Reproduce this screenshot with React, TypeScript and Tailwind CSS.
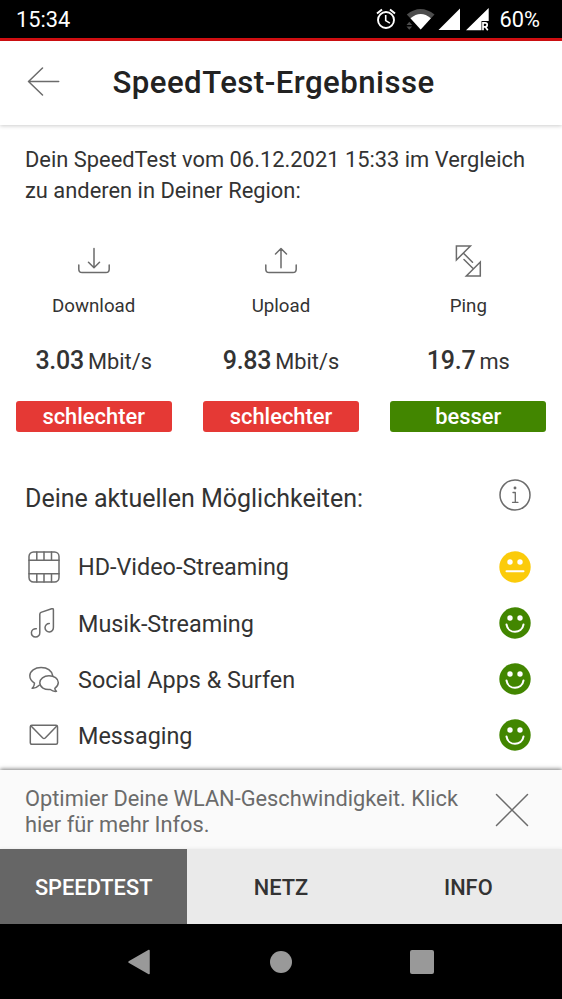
import type { ReactNode } from "react";

const stroke = { fill: "none", stroke: "#6b6b6b", strokeWidth: 1.5, strokeLinecap: "round", strokeLinejoin: "round" } as const;

function StatusBar() {
  return (
    <div className="flex h-[41px] shrink-0 justify-between border-b-[3.5px] border-[#d40f12] bg-black pr-[22px] pl-4 text-[21.800px] leading-[39px] text-white">
      <span>15:34</span>
      <div className="flex">
        <svg width="127" height="37" viewBox="373 0 127 37">
          <g fill="none" stroke="#fff" strokeWidth="1.9">
            <circle cx="386" cy="20" r="8" />
            <path d="M385.7 15v5.6l4.2 2.5" strokeWidth="1.6" />
            <path d="M377 13.6l5-4.2M395 13.6l-5-4.2" />
          </g>
          <path d="M406.800 14.500Q420.500 3.500 434.500 14.500L420.700 29.500Z" fill="#4d4d4d" />
          <path d="M410.500 18.300Q420.700 9.800 430.900 18.300L420.700 29.500Z" fill="#fff" />
          <path d="M406.500 25l2.800-3.200 2.800 3.200zM406.500 26.500l2.800 3.200 2.800-3.200z" fill="#4d4d4d" />
          <path d="M460 8.500V30H438.500z" fill="#fff" />
          <path d="M488.700 8V21H481.500V30.300H466z" fill="#fff" />
          <path d="M483 30.300v-7.500h2.200a1.900 1.900 0 0 1 0 4H483M485.300 26.800l2.500 3.500" fill="none" stroke="#fff" strokeWidth="1.700" />
        </svg>
        <span>60%</span>
      </div>
    </div>
  );
}

function DownloadIcon() {
  return (
    <svg width="34" height="34" viewBox="0 0 34 34" {...stroke}>
      <path d="M17 4.500V23.500M11.500 18.200L17 23.700L22.500 18.200M1.800 21v4.200q0 3.300 3.300 3.300h23.800q3.300 0 3.300-3.300V21" />
    </svg>
  );
}

function UploadIcon() {
  return (
    <svg width="34" height="34" viewBox="0 0 34 34" {...stroke}>
      <path d="M17 23.700V4.700M11.500 10L17 4.500L22.500 10M1.800 21v4.200q0 3.300 3.300 3.300h23.800q3.300 0 3.300-3.300V21" />
    </svg>
  );
}

function PingIcon() {
  return (
    <svg width="34" height="34" viewBox="0 0 34 34" {...stroke} strokeLinejoin="miter">
      <path d="M5.400 2H19.400L5.400 16ZM29.300 18V32H15.300ZM13 9.700L21.500 18.200M13 15.500L21.800 24.200" />
    </svg>
  );
}

type Metric = { label: string; value: string; unit: string; verdict: string; good: boolean; icon: ReactNode };

const metrics: Metric[] = [
  { label: "Download", value: "3.03", unit: "Mbit/s", verdict: "schlechter", good: false, icon: <DownloadIcon /> },
  { label: "Upload", value: "9.83", unit: "Mbit/s", verdict: "schlechter", good: false, icon: <UploadIcon /> },
  { label: "Ping", value: "19.7", unit: "ms", verdict: "besser", good: true, icon: <PingIcon /> },
];

function MetricColumn({ metric }: { metric: Metric }) {
  return (
    <div className="flex flex-col items-center px-[15.6px]">
      {metric.icon}
      <div className="mt-[14px] text-[18.7px] leading-7">{metric.label}</div>
      <div className="mt-[25px] flex h-8 items-baseline gap-[4px] leading-8 whitespace-nowrap">
        <span className="text-[25px] font-medium tracking-[-0.250px]">{metric.value}</span>
        <span className="text-[21.800px]">{metric.unit}</span>
      </div>
      <div
        className={`mt-[24.300px] h-[31.500px] w-full rounded-[3px] text-center text-[21.900px] leading-[32px] font-medium text-white ${metric.good ? "bg-[#428600]" : "bg-[#e53935]"}`}
      >
        {metric.verdict}
      </div>
    </div>
  );
}

function Face({ happy }: { happy: boolean }) {
  return (
    <svg width="32" height="32" viewBox="0 0 32 32">
      <circle cx="16" cy="16" r="15.700" fill={happy ? "#428600" : "#fbcb0a"} />
      <circle cx="11" cy="11" r="2.700" fill="#fff" />
      <circle cx="21" cy="11" r="2.700" fill="#fff" />
      <path d={happy ? "M7.500 17.500C9 27.300 23 27.300 24.500 17.500" : "M7.500 20.300H24.500"} fill="none" stroke="#fff" strokeWidth="2" strokeLinecap="round" />
    </svg>
  );
}

const filmIcon = (
  <svg width="32" height="32" viewBox="0 0 32 32" {...stroke}>
    <rect x="1" y="1" width="30" height="30" rx="4.500" />
    <path d="M1 9.300H31M1 22.800H31M8.800 1V9.300M16 1V9.300M23.500 1V9.300M8.800 22.800V31M16 22.800V31M23.500 22.800V31" />
  </svg>
);

const musicIcon = (
  <svg width="32" height="32" viewBox="0 0 32 32" {...stroke}>
    <path d="M8.300 21.700A4.200 4.200 0 1 0 11.800 25.600V7.300Q11.800 6 13 5.400L23.600 1.800Q25.400 1.200 25.400 2.800V20.300A4.200 4.200 0 1 1 21.300 16.500" />
  </svg>
);

const chatIcon = (
  <svg width="32" height="32" viewBox="0.5 0 32 32" {...stroke}>
    <path d="M11.700 22.300Q8.300 25.700 4.600 25.300Q6.800 23.500 7 20.200C4.300 18.500 2.300 16 2.300 12.800C2.300 7.800 7.500 4.500 13.600 4.500C19.600 4.500 24 7.700 25.200 12.700" />
    <path d="M27.300 25.300C29.500 23.800 30.800 21.800 30.800 19.500C30.800 15.600 26.600 12.800 21.500 12.800C16.300 12.800 12.300 15.800 12.300 19.800C12.300 24.100 17.200 27.200 22.800 26.500Q25.700 28.800 29 28.300Q27.300 27.200 27.300 25.300Z" />
  </svg>
);

const mailIcon = (
  <svg width="32" height="32" viewBox="0 0 32 32" {...stroke}>
    <rect x="2.300" y="6.300" width="27.200" height="19" rx="1.500" />
    <path d="M3.300 7.300L14.800 19Q16 20 17.200 19L28.600 7.300" />
  </svg>
);

const abilities = [
  { label: "HD-Video-Streaming", icon: filmIcon, happy: false },
  { label: "Musik-Streaming", icon: musicIcon, happy: true },
  { label: "Social Apps & Surfen", icon: chatIcon, happy: true },
  { label: "Messaging", icon: mailIcon, happy: true },
];

export default function App() {
  return (
    <div className="flex h-[999px] w-[562px] flex-col overflow-hidden bg-white font-[Roboto,sans-serif] text-[#333]">
      <StatusBar />
      <header className="flex h-[84px] shrink-0 items-center bg-white pl-[27px] shadow-[0_1px_4px_rgba(0,0,0,0.2)]">
        <svg width="34" height="32" viewBox="0 0 34 32" {...stroke}>
          <path d="M31.700 14.500H1.500M15.500 1L1.500 14.500L15.500 28" />
        </svg>
        <h1 className="ml-[51.500px] text-[31.200px] leading-10 font-medium tracking-[0.450px] whitespace-nowrap text-[#222]">SpeedTest-Ergebnisse</h1>
      </header>

      <main className="flex h-[645px] shrink-0 flex-col">
        <p className="mt-[19px] pl-[25px] text-[21.880px] leading-[31.300px] whitespace-nowrap">
          Dein SpeedTest vom 06.12.2021 15:33 im Vergleich
          <br />
          zu anderen in Deiner Region:
        </p>
        <section className="mt-[37px] grid grid-cols-3">
          {metrics.map((m) => (
            <MetricColumn key={m.label} metric={m} />
          ))}
        </section>
        <div className="mt-[46.500px] flex h-8 items-center justify-between pr-[31px] pl-[25px]">
          <h2 className="pt-[8px] text-[25px] leading-8 whitespace-nowrap">Deine aktuellen Möglichkeiten:</h2>
          <svg width="32" height="32" viewBox="0 0 32 32" {...stroke}>
            <circle cx="16" cy="16" r="15" />
            <path d="M14 13.500H16.300V23.300M13.500 23.300H19" strokeWidth="1.300" />
            <circle cx="16" cy="9" r="0.700" fill="#6b6b6b" />
          </svg>
        </div>
        <ul className="mt-[27.700px]">
          {abilities.map((a) => (
            <li key={a.label} className="flex h-[56.200px] items-center pr-[31px] pl-[28px]">
              {a.icon}
              <span className="ml-[18px] flex-1 pt-[1.500px] text-[23.380px] leading-8 whitespace-nowrap">{a.label}</span>
              <Face happy={a.happy} />
            </li>
          ))}
        </ul>
      </main>

      <aside className="relative flex h-[79px] shrink-0 items-start justify-between bg-[#fafafa] pr-[33px] pl-[25px] text-[#6b6b6b] shadow-[0_-1px_4px_rgba(0,0,0,0.5)]">
        <p className="mt-[16px] text-[21.800px] leading-[25.700px] whitespace-nowrap">
          Optimier Deine WLAN-Geschwindigkeit. Klick
          <br />
          hier für mehr Infos.
        </p>
        <svg className="mt-[23px]" width="34" height="34" viewBox="0 0 34 34" {...stroke}>
          <path d="M1.500 1.500L32.500 32.500M32.500 1.500L1.500 32.500" />
        </svg>
      </aside>

      <nav className="relative grid h-[75px] shrink-0 grid-cols-3 bg-[#eaeaea] text-center text-[21.800px] leading-[73px] font-medium shadow-[0_-1px_3px_rgba(0,0,0,0.05)]">
        <span className="bg-[#666] pt-0.5 text-white">SPEEDTEST</span>
        <span className="pt-0.5">NETZ</span>
        <span className="pt-0.5">INFO</span>
      </nav>

      <div className="flex h-[75px] shrink-0 items-center justify-between bg-black pr-[128px] pl-[127px]">
        <svg width="25" height="26" viewBox="0 0 25 26">
          <path d="M2 13L22 1.500V24.500Z" fill="#999" stroke="#999" strokeWidth="1.500" strokeLinejoin="round" />
        </svg>
        <span className="size-[22px] rounded-full bg-[#999]" />
        <span className="size-6 rounded-[2px] bg-[#999]" />
      </div>
    </div>
  );
}
